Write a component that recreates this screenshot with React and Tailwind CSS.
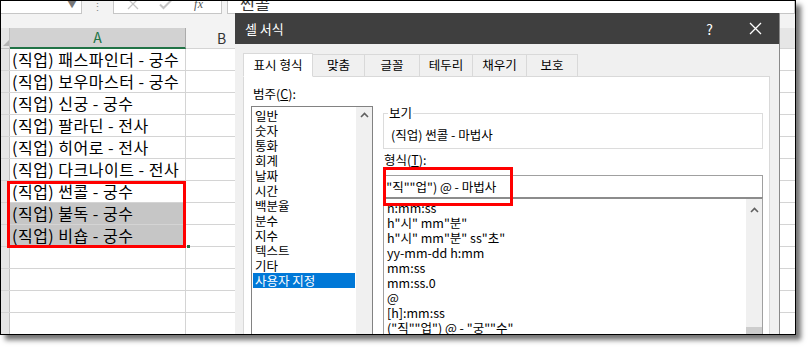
import React from 'react';

const rows = [
  '(직업) 패스파인더 - 궁수',
  '(직업) 보우마스터 - 궁수',
  '(직업) 신궁 - 궁수',
  '(직업) 팔라딘 - 전사',
  '(직업) 히어로 - 전사',
  '(직업) 다크나이트 - 전사',
  '(직업) 썬콜 - 궁수',
  '(직업) 불독 - 궁수',
  '(직업) 비숍 - 궁수',
  '',
  '',
  '',
  '',
];

const categories = ['일반', '숫자', '통화', '회계', '날짜', '시간', '백분율', '분수', '지수', '텍스트', '기타', '사용자 지정'];

const formats = [
  'h:mm:ss',
  'h"시" mm"분"',
  'h"시" mm"분" ss"초"',
  'yy-mm-dd h:mm',
  'mm:ss',
  'mm:ss.0',
  '@',
  '[h]:mm:ss',
  '("직""업") @ - "궁""수"',
];

const tabs = [
  { label: '표시 형식', w: 'w-[70px]' },
  { label: '맞춤', w: 'w-[52px]' },
  { label: '글꼴', w: 'w-[55px]' },
  { label: '테두리', w: 'w-[53px]' },
  { label: '채우기', w: 'w-[54px]' },
  { label: '보호', w: 'w-[51px]' },
];

function UpArrow() {
  return (
    <svg width="9" height="6" viewBox="0 0 9 6">
      <path d="M1 5 L4.5 1.5 L8 5" fill="none" stroke="#606060" strokeWidth="1.6" />
    </svg>
  );
}

// formula bar, cut at the top of the shot
function FormulaBar() {
  return (
    <div className="h-[13px] overflow-hidden">
      <div className="flex h-[23px] -mt-[10px] bg-[#f3f3f3]">
        <div className="w-[81px] bg-white border-r border-b border-[#c6c6c6] flex justify-end items-center pr-[4px]">
          <span className="text-[9px] text-[#777] mt-[6px]">▼</span>
        </div>
        <div className="w-[31px] flex justify-center items-end pb-[2px] text-[#8a8a8a] text-[11px] leading-none">⋮</div>
        <div className="w-[109px] bg-white border border-t-0 border-[#c6c6c6] flex items-center">
          <svg width="12" height="12" viewBox="0 0 12 12" className="ml-[13px] mt-[4px]">
            <path d="M1 1 L11 11 M11 1 L1 11" stroke="#c4c4c4" strokeWidth="1.3" />
          </svg>
          <svg width="13" height="11" viewBox="0 0 13 11" className="ml-[20px] mt-[4px]">
            <path d="M1 5.5 L4.5 9 L12 1.5" fill="none" stroke="#c4c4c4" strokeWidth="2" />
          </svg>
          <span className="ml-[22px] mt-[4px] italic font-['Liberation_Serif',serif] text-[12px] text-[#555]">fx</span>
        </div>
        <div className="w-[5px]" />
        <div className="flex-1 bg-white border border-t-0 border-[#c6c6c6] pl-[12px] pt-[3px] text-[16px] leading-[18px] text-[#333]">
          썬콜
        </div>
      </div>
    </div>
  );
}

function Sheet() {
  return (
    <div className="flex flex-col text-[16px] tracking-[0.5px] text-black">
      <FormulaBar />
      <div className="h-[14px] bg-[#f3f3f3]" />
      {/* column headers */}
      <div className="flex h-[21px] tracking-normal">
        <div className="w-[9px] bg-[#e6e6e6] border-r border-b border-[#c0c0c0] flex items-end justify-end">
          <svg width="6" height="6" viewBox="0 0 6 6" className="mb-[2px]">
            <path d="M6 0 L6 6 L0 6 Z" fill="#b4b4b4" />
          </svg>
        </div>
        <div className="w-[176px] bg-[#d2d2d2] border-r border-[#ababab] border-b-2 border-b-[#217346] flex items-center justify-center text-[#217346] text-[14px]">
          A
        </div>
        <div className="w-[72px] bg-[#f3f3f3] border-r border-b border-[#d4d4d4] flex items-center justify-center text-[14px] text-[#333]">
          B
        </div>
        <div className="flex-1 bg-[#e6e6e6] border-b border-[#d4d4d4]" />
      </div>
      {rows.map((r, i) => (
        <div key={i} className="flex h-[22px] border-b border-[#d4d4d4]">
          <div className="w-[9px] bg-[#e6e6e6] border-r border-[#c0c0c0]" />
          <div
            className={
              'w-[176px] border-r border-[#d4d4d4] pl-[2px] leading-[21px] whitespace-nowrap overflow-hidden ' +
              (i === 7 || i === 8 ? 'bg-[#c6c6c6]' : 'bg-white')
            }
          >
            {r}
          </div>
          <div className="w-[72px] border-r border-[#d4d4d4]" />
          <div className="flex-1" />
        </div>
      ))}
    </div>
  );
}

function FormatDialog() {
  return (
    <div className="absolute left-[234px] top-[12px] w-[545px] h-[330px] flex flex-col border-r border-[#8a8a8a] text-[12.5px] text-black z-10">
      <div className="h-[31px] bg-[#3f3f3f] flex items-center text-white shrink-0">
        <span className="pl-[10px] text-[13px]">셀 서식</span>
        <span className="ml-auto text-[14px] leading-none">?</span>
        <svg width="13" height="13" viewBox="0 0 13 13" className="ml-[36px] mr-[17px]">
          <path d="M1 1 L12 12 M12 1 L1 12" stroke="#ffffff" strokeWidth="1.3" />
        </svg>
      </div>
      <div className="flex-1 bg-[#f0f0f0] pt-[8px] pl-[8px] flex flex-col">
        <div className="flex items-end h-[24px] relative z-10">
          {tabs.map((t, i) => (
            <div
              key={t.label}
              className={
                t.w +
                ' flex items-center justify-center border border-[#d9d9d9] ' +
                (i === 0 ? 'h-[24px] bg-white border-b-white -mb-px' : 'h-[22px] bg-[#f0f0f0] border-l-0 border-b-0')
              }
            >
              {t.label}
            </div>
          ))}
        </div>
        <div className="w-[527px] flex-1 bg-white border border-[#d9d9d9] flex">
          {/* 범주 */}
          <div className="ml-[7px] w-[122px] flex flex-col pt-[9px]">
            <div className="pl-[2px] leading-[16px]">
              범주(<span className="underline">C</span>):
            </div>
            <div className="mt-[4px] flex-1 border border-[#828282] flex">
              <div className="flex-1 pt-[1px] flex flex-col">
                {categories.map((c) => (
                  <div
                    key={c}
                    className={
                      'ml-[1px] mr-[1px] pl-[2px] leading-[15px] h-[15px] whitespace-nowrap ' +
                      (c === '사용자 지정' ? 'bg-[#0078d7] text-white' : '')
                    }
                  >
                    {c}
                  </div>
                ))}
              </div>
              <div className="w-[16px] bg-[#f0f0f0] flex justify-center pt-[5px]">
                <div className="h-[6px]">
                  <UpArrow />
                </div>
              </div>
            </div>
          </div>
          {/* 보기 / 형식 */}
          <div className="ml-[10px] w-[380px] flex flex-col">
            <div className="mt-[36px] h-[36px] border border-[#dcdcdc] relative pl-[7px] pt-[13px] leading-[16px]">
              <span className="absolute -top-[9px] left-[4px] bg-white px-[1px] leading-[16px]">보기</span>
              (직업) 썬콜 - 마법사
            </div>
            <div className="mt-[3px] leading-[16px] pl-[1px]">
              형식(<span className="underline">T</span>):
            </div>
            <div className="mt-[7px] h-[22px] border border-b-0 border-[#a0a0a0] overflow-hidden pl-[4px] leading-[21px] whitespace-nowrap">
              <span className="-ml-[6px]">("직""업") @ - 마법사</span>
            </div>
            <div className="flex-1 border border-[#a0a0a0] border-t-2 border-t-[#8c8c8c] flex overflow-hidden">
              <div className="flex-1 pl-[3px] flex flex-col pt-[1px]">
                {formats.map((f) => (
                  <div key={f} className="leading-[15px] h-[15px] whitespace-nowrap shrink-0">
                    {f}
                  </div>
                ))}
              </div>
              <div className="w-[16px] bg-[#f0f0f0] flex flex-col items-center pt-[8px]">
                <div className="h-[6px]">
                  <UpArrow />
                </div>
                <div className="mt-auto w-[16px] h-[14px] bg-[#cdcdcd]" />
              </div>
            </div>
          </div>
        </div>
      </div>
    </div>
  );
}

export default function App() {
  return (
    <div className="w-[808px] h-[347px] bg-white relative overflow-hidden font-['Noto_Sans_CJK_KR','Noto_Sans',sans-serif]">
      <div className="absolute left-0 top-0 w-[796px] h-[335px] border border-black bg-white overflow-hidden shadow-[5px_5px_5px_rgba(0,0,0,0.55)]">
        <Sheet />
        <FormatDialog />
        {/* highlight boxes */}
        <div className="absolute left-[6px] top-[180px] w-[179px] h-[67px] border-[3px] border-[#ff0000] z-20" />
        <div className="absolute left-[186px] top-[244px] w-[3px] h-[3px] bg-[#217346]" />
        <div className="absolute left-[382px] top-[166px] w-[130px] h-[39px] border-[3px] border-[#ff0000] z-20" />
      </div>
    </div>
  );
}
